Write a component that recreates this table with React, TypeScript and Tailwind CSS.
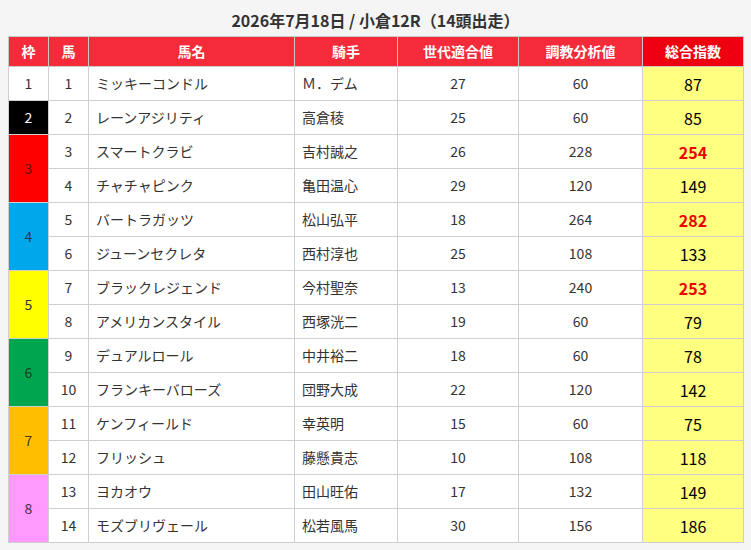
const FRAME_STYLES: Record<number, string> = {
  1: 'bg-white text-[#333]',
  2: 'bg-black text-white',
  3: 'bg-[#ff0000] text-[#5a1010]',
  4: 'bg-[#00a7ea] text-[#1f3a4a]',
  5: 'bg-[#ffff00] text-[#333]',
  6: 'bg-[#00a550] text-[#1c3a28]',
  7: 'bg-[#ffbf00] text-[#4a3a10]',
  8: 'bg-[#ff99ff] text-[#4a2a4a]',
};

type Horse = {
  frame: number;
  no: number;
  name: string;
  jockey: string;
  gen: number;
  train: number;
  total: number;
};

const HORSES: Horse[] = [
  { frame: 1, no: 1, name: 'ミッキーコンドル', jockey: 'Ｍ．デム', gen: 27, train: 60, total: 87 },
  { frame: 2, no: 2, name: 'レーンアジリティ', jockey: '高倉稜', gen: 25, train: 60, total: 85 },
  { frame: 3, no: 3, name: 'スマートクラビ', jockey: '吉村誠之', gen: 26, train: 228, total: 254 },
  { frame: 3, no: 4, name: 'チャチャピンク', jockey: '亀田温心', gen: 29, train: 120, total: 149 },
  { frame: 4, no: 5, name: 'バートラガッツ', jockey: '松山弘平', gen: 18, train: 264, total: 282 },
  { frame: 4, no: 6, name: 'ジューンセクレタ', jockey: '西村淳也', gen: 25, train: 108, total: 133 },
  { frame: 5, no: 7, name: 'ブラックレジェンド', jockey: '今村聖奈', gen: 13, train: 240, total: 253 },
  { frame: 5, no: 8, name: 'アメリカンスタイル', jockey: '西塚洸二', gen: 19, train: 60, total: 79 },
  { frame: 6, no: 9, name: 'デュアルロール', jockey: '中井裕二', gen: 18, train: 60, total: 78 },
  { frame: 6, no: 10, name: 'フランキーバローズ', jockey: '団野大成', gen: 22, train: 120, total: 142 },
  { frame: 7, no: 11, name: 'ケンフィールド', jockey: '幸英明', gen: 15, train: 60, total: 75 },
  { frame: 7, no: 12, name: 'フリッシュ', jockey: '藤懸貴志', gen: 10, train: 108, total: 118 },
  { frame: 8, no: 13, name: 'ヨカオウ', jockey: '田山旺佑', gen: 17, train: 132, total: 149 },
  { frame: 8, no: 14, name: 'モズブリヴェール', jockey: '松若風馬', gen: 30, train: 156, total: 186 },
];

export default function App() {
  const frameCount = (f: number) => HORSES.filter((h) => h.frame === f).length;

  return (
    <div
      className="w-[751px] h-[550px] bg-[#f5f5f5] text-[#333] overflow-hidden"
      style={{ fontFamily: '"Noto Sans CJK JP", "Noto Sans", sans-serif' }}
    >
      <h1 className="h-[36px] pt-[7px] text-center text-[16px] font-bold leading-[26px] text-[#333]">
        2026年7月18日 / 小倉12R（14頭出走）
      </h1>

      <table className="ml-[8px] w-[735px] table-fixed border-collapse text-[14px]">
        <colgroup>
          <col className="w-[40px]" />
          <col className="w-[40px]" />
          <col className="w-[206px]" />
          <col className="w-[103px]" />
          <col className="w-[121px]" />
          <col className="w-[124px]" />
          <col className="w-[101px]" />
        </colgroup>
        <thead>
          <tr className="h-[30px] text-white font-bold">
            <th className="bg-[#f52a3a] border border-[#c9c9c9] font-bold">枠</th>
            <th className="bg-[#f52a3a] border border-[#c9c9c9] font-bold">馬</th>
            <th className="bg-[#f52a3a] border border-[#c9c9c9] font-bold">馬名</th>
            <th className="bg-[#f52a3a] border border-[#c9c9c9] font-bold">騎手</th>
            <th className="bg-[#f52a3a] border border-[#c9c9c9] font-bold">世代適合値</th>
            <th className="bg-[#f52a3a] border border-[#c9c9c9] font-bold">調教分析値</th>
            <th className="bg-[#ee0010] border border-[#c9c9c9] font-bold">総合指数</th>
          </tr>
        </thead>
        <tbody>
          {HORSES.map((h, i) => {
            const firstOfFrame = i === 0 || HORSES[i - 1].frame !== h.frame;
            const highlight = h.total >= 250;
            return (
              <tr key={h.no} className="h-[34px]">
                {firstOfFrame && (
                  <td
                    rowSpan={frameCount(h.frame)}
                    className={`border border-[#cfcfcf] text-center ${FRAME_STYLES[h.frame]}`}
                  >
                    {h.frame}
                  </td>
                )}
                <td className="border border-[#cfcfcf] bg-white text-center">{h.no}</td>
                <td className="border border-[#cfcfcf] bg-white pl-[7px]">{h.name}</td>
                <td className="border border-[#cfcfcf] bg-white pl-[7px]">{h.jockey}</td>
                <td className="border border-[#cfcfcf] bg-white text-center">{h.gen}</td>
                <td className="border border-[#cfcfcf] bg-white text-center">{h.train}</td>
                <td
                  className={`border border-[#cfcfcf] bg-[#ffff80] text-center text-[16px] ${
                    highlight ? 'font-bold text-[#ee0000]' : 'text-black'
                  }`}
                >
                  {h.total}
                </td>
              </tr>
            );
          })}
        </tbody>
      </table>
    </div>
  );
}
